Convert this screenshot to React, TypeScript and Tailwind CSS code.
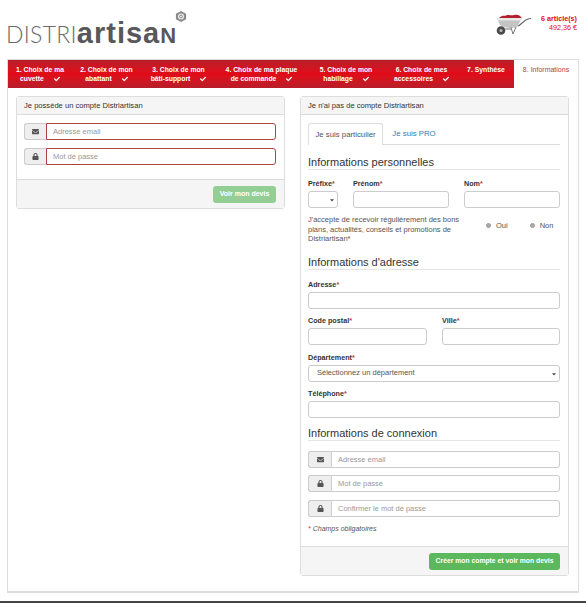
import type { ReactNode } from 'react';
import { FaCaretDown, FaCheck, FaEnvelope, FaLock } from 'react-icons/fa';

const steps = [
  { lines: ['1. Choix de ma', 'cuvette'], width: 'w-[64px]', done: true },
  { lines: ['2. Choix de mon', 'abattant'], width: 'w-[69px]', done: true },
  { lines: ['3. Choix de mon', 'bâti-support'], width: 'w-[75px]', done: true },
  { lines: ['4. Choix de ma plaque', 'de commande'], width: 'w-[91px]', done: true },
  { lines: ['5. Choix de mon', 'habillage'], width: 'w-[78px]', done: true },
  { lines: ['6. Choix de mes', 'accessoires'], width: 'w-[73px]', done: true },
  { lines: ['7. Synthèse'], width: 'w-[56px]', done: false },
];

function Logo() {
  return (
    <div className="flex items-baseline h-[59px] pl-[6px] pt-[20px] relative">
      <span className="font-['Lato','Liberation_Sans',sans-serif] text-[23px] leading-[27px] font-light text-[#6a6a6a] tracking-[0.3px]">
        DISTRI
      </span>
      <span className="font-['Liberation_Sans',sans-serif] text-[29px] leading-[27px] font-bold text-[#58585a] tracking-[1px]">
        artisa<span className="text-[22px]">N</span>
      </span>
      <svg className="absolute left-[175px] top-[11px]" width="12" height="11" viewBox="0 0 13 13">
        <polygon points="6.5,0 12.500,3.250 12.500,9.750 6.500,13 0.500,9.750 0.500,3.250" fill="#8a8a8a" />
        <circle cx="6.5" cy="6.5" r="3.600" fill="#eee" />
        <circle cx="6.5" cy="6.5" r="1.700" fill="none" stroke="#777" strokeWidth="1" />
      </svg>
    </div>
  );
}

function Barrow() {
  return (
    <svg width="36" height="22" viewBox="0 0 36 22" className="mt-[2px]">
      <path d="M3 4 C6 1 8 2 10 1.500 C13 0 15 2 18 1 C21 0 24 1 26 4 Z" fill="#b3202c" />
      <path d="M1 4 H26 L21 13 C16 15 8 14 4 11 Z" fill="#c4c4c4" />
      <path d="M1 4 H26 L25 6.500 H2.500 Z" fill="#e8e8e8" />
      <path d="M22 12 C25 11 28 6 32 5 L35 4.500" fill="none" stroke="#6a6a6a" strokeWidth="1.200" />
      <circle cx="5" cy="16.500" r="4.300" fill="#4a4a4a" />
      <circle cx="5" cy="16.500" r="1.500" fill="#bbb" />
      <path d="M15 13.500 L17 20 L20 13 M9 15 H15" fill="none" stroke="#777" strokeWidth="1" />
    </svg>
  );
}

function StepTabs() {
  return (
    <div className="flex h-[28px]">
      {steps.map((s) => (
        <div
          key={s.lines[0]}
          className={`${s.width} shrink-0 pt-[5px] text-center text-white font-bold text-[6.8px] leading-[9px] bg-gradient-to-b from-[#b81d29] via-[#e20a17] to-[#b81d29]`}
        >
          <div className="whitespace-nowrap">{s.lines[0]}</div>
          {s.lines[1] && (
            <div className="flex justify-center items-center gap-[10px] whitespace-nowrap">
              {s.lines[1]}
              {s.done && <FaCheck className="text-[6px]" />}
            </div>
          )}
        </div>
      ))}
      {/* onglet actif */}
      <div className="flex-1 pt-[5px] text-center text-[7px] leading-[9px] text-[#b5404a] whitespace-nowrap">
        8. Informations
      </div>
    </div>
  );
}

function Panel({
  title,
  footer,
  className,
  children,
}: {
  title: string;
  footer: ReactNode;
  className: string;
  children: ReactNode;
}) {
  return (
    <div className={`${className} border border-[#ddd] rounded-[3px] bg-white flex flex-col`}>
      <div className="h-[18px] pl-[7px] flex items-center bg-[#f5f5f5] border-b border-[#ddd] text-[7.6px] text-[#333]">
        {title}
      </div>
      <div className="flex-1 pl-[7px] pr-[8px]">{children}</div>
      <div className="h-[29px] pr-[8px] flex items-center justify-end bg-[#f5f5f5] border-t border-[#ddd]">
        {footer}
      </div>
    </div>
  );
}

function IconInput({
  icon,
  placeholder,
  error,
  addon,
  className,
}: {
  icon: ReactNode;
  placeholder: string;
  error?: boolean;
  addon: string;
  className?: string;
}) {
  return (
    <div className={`flex h-[17px] ${className ?? ''}`}>
      <div
        className={`${addon} flex items-center justify-center bg-[#eee] border border-r-0 border-[#ccc] rounded-l-[3px] text-[#555] text-[7px]`}
      >
        {icon}
      </div>
      <input
        placeholder={placeholder}
        className={`flex-1 min-w-0 h-full pl-[6px] bg-white border rounded-r-[3px] text-[7.5px] outline-none placeholder:text-[#999] ${
          error ? 'border-[#a94442]' : 'border-[#ccc]'
        }`}
      />
    </div>
  );
}

function SectionTitle({ children, className }: { children: ReactNode; className: string }) {
  return (
    <div className={`${className} h-[15px] text-[11px] leading-[14px] text-[#333] border-b border-[#e5e5e5]`}>
      {children}
    </div>
  );
}

function Label({ children, star = true }: { children: ReactNode; star?: boolean }) {
  return (
    <label className="block h-[11px] text-[7.2px] leading-[8px] font-bold text-[#333] whitespace-nowrap">
      {children}
      {star && <span className="text-[#a94442]">*</span>}
    </label>
  );
}

function TextField({ className }: { className?: string }) {
  return <input className={`block w-full h-[17px] bg-white border border-[#ccc] rounded-[3px] outline-none ${className ?? ''}`} />;
}

function SelectField({ text }: { text?: string }) {
  return (
    <div className="relative">
      <select className="block w-full h-[17px] pl-[8px] appearance-none bg-white border border-[#ccc] rounded-[3px] text-[7.5px] text-[#555] outline-none">
        {text && <option>{text}</option>}
      </select>
      <FaCaretDown className="absolute right-[3px] top-[6px] text-[6px] text-[#444]" />
    </div>
  );
}

function Radio({ label }: { label: string }) {
  return (
    <label className="flex items-center gap-[5px] text-[7.5px] text-[#555]">
      <input type="radio" name="bons-plans" className="appearance-none w-[5px] h-[5px] rounded-full bg-[#aaa] border border-[#999]" />
      {label}
    </label>
  );
}

export default function App() {
  return (
    <div className="w-[586px] h-[603px] bg-white overflow-hidden flex flex-col font-['Liberation_Sans',Arial,sans-serif]">
      {/* Header */}
      <header className="h-[59px] flex justify-between shrink-0">
        <Logo />
        <div className="flex pt-[12px] pr-[9px] gap-[9px]">
          <Barrow />
          <div className="pt-[2px] text-right text-[7.2px] leading-[9px] text-[#e20a17]">
            <div className="font-bold">6 article(s)</div>
            <div>492,36 €</div>
          </div>
        </div>
      </header>

      <main className="mx-[7px] h-[534px] shrink-0 border border-[#ddd] border-b-2">
        <StepTabs />

        <div className="flex items-start gap-[15px] mt-[8px] ml-[8px]">
          <Panel
            title="Je possède un compte Distriartisan"
            className="w-[269px] h-[113px]"
            footer={
              <button className="w-[63px] h-[17px] rounded-[3px] bg-[#93cf95] text-white text-[7px] font-bold">
                Voir mon devis
              </button>
            }
          >
            <IconInput
              error
              className="mt-[8px]"
              addon="w-[22px]"
              icon={<FaEnvelope />}
              placeholder="Adresse email"
            />
            <IconInput
              error
              className="mt-[8px]"
              addon="w-[22px]"
              icon={<FaLock />}
              placeholder="Mot de passe"
            />
          </Panel>

          <Panel
            title="Je n'ai pas de compte Distriartisan"
            className="w-[269px] h-[480px]"
            footer={
              <button className="w-[131px] h-[17px] rounded-[3px] bg-[#5cb85c] text-white text-[6.8px] font-bold whitespace-nowrap">
                Créer mon compte et voir mon devis
              </button>
            }
          >
            {/* Onglets */}
            <div className="flex h-[22px] mt-[8px] border-b border-[#ddd] text-[7.8px]">
              <div className="w-[75px] h-[22px] flex items-center justify-center bg-white border border-b-0 border-[#ddd] rounded-t-[3px] text-[#555]">
                Je suis particulier
              </div>
              <div className="w-[62px] flex items-center justify-center text-[#337ab7]">Je suis PRO</div>
            </div>

            <SectionTitle className="mt-[10px]">Informations personnelles</SectionTitle>
            <div className="flex gap-[15px] mt-[10px]">
              <div className="w-[30px]">
                <Label>Préfixe</Label>
                <SelectField />
              </div>
              <div className="w-[96px]">
                <Label>Prénom</Label>
                <TextField />
              </div>
              <div className="w-[96px]">
                <Label>Nom</Label>
                <TextField />
              </div>
            </div>
            <div className="flex mt-[7px]">
              <p className="w-[160px] text-[7.5px] leading-[9.500px] text-[#555]">
                J'accepte de recevoir régulièrement des bons plans, actualités, conseils et promotions de Distriartisan*
              </p>
              <div className="flex items-start gap-[22px] ml-[18px] pt-[5px]">
                <Radio label="Oui" />
                <Radio label="Non" />
              </div>
            </div>

            <SectionTitle className="mt-[11px]">Informations d'adresse</SectionTitle>
            <div className="mt-[11px]">
              <Label>Adresse</Label>
              <TextField />
            </div>
            <div className="flex gap-[15px] mt-[8px]">
              <div className="w-[119px]">
                <Label>Code postal</Label>
                <TextField />
              </div>
              <div className="w-[118px]">
                <Label>Ville</Label>
                <TextField />
              </div>
            </div>
            <div className="mt-[9px]">
              <Label>Département</Label>
              <SelectField text="Sélectionnez un département" />
            </div>
            <div className="mt-[8px]">
              <Label>Téléphone</Label>
              <TextField />
            </div>

            <SectionTitle className="mt-[8px]">Informations de connexion</SectionTitle>
            <IconInput className="mt-[10px]" addon="w-[23px]" icon={<FaEnvelope />} placeholder="Adresse email" />
            <IconInput className="mt-[7px]" addon="w-[23px]" icon={<FaLock />} placeholder="Mot de passe" />
            <IconInput className="mt-[8px]" addon="w-[23px]" icon={<FaLock />} placeholder="Confirmer le mot de passe" />
            <p className="mt-[7px] text-[7px] leading-[9px] italic text-[#555]">
              <span className="text-[#a94442]">*</span> Champs obligatoires
            </p>
          </Panel>
        </div>
      </main>

      <div className="flex-1 mt-[8px] bg-[#444]" />
    </div>
  );
}
